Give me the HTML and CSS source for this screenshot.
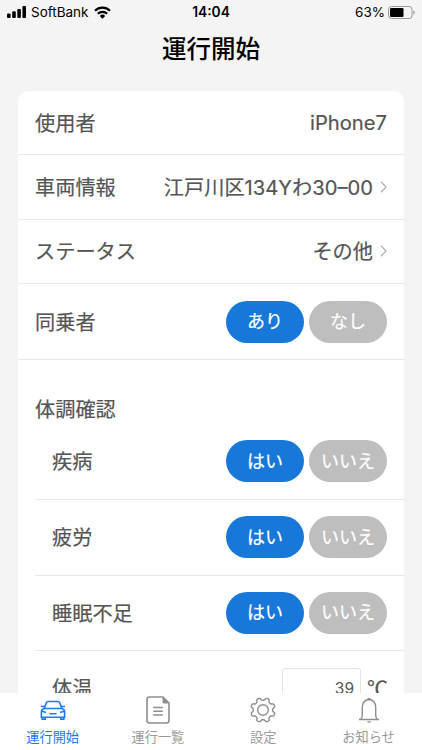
FILE: index.html
```html
<!DOCTYPE html>
<html lang="ja">
<head>
  <meta charset="UTF-8">
  <meta name="viewport" content="width=device-width, initial-scale=1.0">
  <title>運行開始</title>
  <link rel="stylesheet" href="styles.css">
</head>
<body>
  <div class="status-bar">
    <div class="carrier">
      <svg width="20" height="12" viewBox="0 0 20 12"><rect x="0" y="7.5" width="3.6" height="4.5" rx="1"/><rect x="5.2" y="5.3" width="3.6" height="6.7" rx="1"/><rect x="10.3" y="3" width="3.6" height="9" rx="1"/><rect x="15.4" y="0" width="3.6" height="12" rx="1"/></svg>
      <span class="carrier-name">SoftBank</span>
      <svg width="17" height="13" viewBox="0 0 17 13"><g fill="none" stroke="#000" stroke-width="2.2"><path d="M1 4.8a10.6 10.6 0 0 1 15 0"/><path d="M3.8 7.8a6.7 6.7 0 0 1 9.4 0"/></g><path d="M5.8 9.9a3.9 3.9 0 0 1 5.4 0L8.5 12.7z"/></svg>
    </div>
    <span class="clock">14:04</span>
    <div class="battery">
      <span>63%</span>
      <svg width="27" height="13" viewBox="0 0 27 13"><rect x=".5" y=".5" width="23.5" height="12" rx="3" fill="none" stroke="#999"/><rect x="2" y="2" width="13.5" height="9" rx="1.2"/><path d="M25.3 4.3q1.5.8 1.5 2.2t-1.5 2.2z" fill="#999"/></svg>
    </div>
  </div>
  <h1>運行開始</h1>

  <main>
    <div class="card">
      <div class="row">
        <span>使用者</span>
        <span class="value device">iPhone7</span>
      </div>
      <div class="row">
        <span>車両情報</span>
        <span class="value">江戸川区134Yわ30–00<svg class="chevron" viewBox="0 0 7 12"><path d="M1 .8 6 6 1 11.2"/></svg></span>
      </div>
      <div class="row">
        <span>ステータス</span>
        <span class="value">その他<svg class="chevron" viewBox="0 0 7 12"><path d="M1 .8 6 6 1 11.2"/></svg></span>
      </div>
      <div class="row row-choice">
        <span>同乗者</span>
        <div class="choices"><button class="active">あり</button><button>なし</button></div>
      </div>

      <h2>体調確認</h2>
      <div class="checks">
        <div class="row row-choice">
          <span>疾病</span>
          <div class="choices"><button class="active">はい</button><button>いいえ</button></div>
        </div>
        <div class="row row-choice">
          <span>疲労</span>
          <div class="choices"><button class="active">はい</button><button>いいえ</button></div>
        </div>
        <div class="row row-choice">
          <span>睡眠不足</span>
          <div class="choices"><button class="active">はい</button><button>いいえ</button></div>
        </div>
        <div class="row row-temp">
          <span>体温</span>
          <div class="temp"><input type="text" value="39"><span class="unit">℃</span></div>
        </div>
      </div>
    </div>
  </main>

  <nav>
    <a class="active">
      <svg width="28" height="28" viewBox="0 0 28 28"><path d="M5.2 12.5 7.3 6.7q.4-1.200 1.700-1.200h10q1.300 0 1.700 1.200l2.100 5.800M2 10.500h3.500M22.500 10.500H26M5.200 12.500h17.600q2.800.8 2.800 3.500v5.300H2.400V16q0-2.700 2.800-3.500zM3.200 21.300v1.900h3v-1.900M24.800 21.300v1.900h-3v-1.900M10.500 17.800h7M3.200 15.200l3.800 1.200M24.800 15.200l-3.800 1.200"/></svg>
      <span>運行開始</span>
    </a>
    <a>
      <svg width="28" height="28" viewBox="0 0 28 28"><path d="M19 1H5.5Q3 1 3 3.500v21Q3 27 5.500 27h17q2.500 0 2.500-2.500V7z"/><path class="solid" d="M18.500 1v5q0 1.500 1.500 1.500h5.500z"/><path d="M9.200 11.500h9.600M9.200 15.200h9.600M9.200 19h9.600"/></svg>
      <span>運行一覧</span>
    </a>
    <a>
      <svg class="thin" width="28" height="28" viewBox="0 0 28 28"><path id="gear" d=""/><circle cx="14" cy="14" r="5.3"/></svg>
      <span>設定</span>
    </a>
    <a>
      <svg class="thin" width="28" height="28" viewBox="0 0 28 28"><path d="M4 23.500h20M6 23.200q1.300-1.800 1.300-4.500v-7q0-7.500 6.700-8.200 6.700.7 6.700 8.200v7q0 2.700 1.300 4.500"/><path class="solid" d="M12 4q0-2.300 2-2.300T16 4zM12 25.300h4q-.6 1.500-2 1.500t-2-1.500z"/></svg>
      <span>お知らせ</span>
    </a>
  </nav>
  <script src="script.js"></script>
</body>
</html>
```
FILE: styles.css
```css
*{box-sizing:border-box}
body{margin:0;height:100vh;overflow:hidden;display:flex;flex-direction:column;background:#f4f4f4;color:#555;font-family:Inter,"Noto Sans CJK JP",sans-serif}
.status-bar{height:24px;flex:none;display:grid;grid-template-columns:1fr auto 1fr;align-items:center;padding:0 7px;color:#000;font-size:13.5px}
.carrier,.battery{display:flex;align-items:center}
.carrier-name{margin:0 5px 0 4px}
.battery{justify-content:flex-end;gap:3px}
.clock{font-weight:600;font-size:13.8px}
h1{margin:0;height:67px;flex:none;line-height:50px;text-align:center;font-size:24.5px;font-weight:500;color:#000}
main{flex:1;min-height:0;overflow:hidden;padding:0 18px}
.card{background:#fff;border-radius:10px 10px 0 0}
.row{display:flex;justify-content:space-between;align-items:center;height:64.4px;padding:0 17px;border-bottom:1px solid #e9e9e9;font-size:20.2px;line-height:30px}
.row>span{padding-top:2px;-webkit-text-stroke:.2px}
.row>.device{padding-top:0}
.value{display:flex;align-items:center}
.chevron{width:7px;height:12px;margin:-2px 0 0 7px;fill:none;stroke:#b0b0b0;stroke-width:1.3}
.row-choice{height:75.8px}
.choices{display:flex;gap:5px}
.choices button{width:78px;height:42px;padding:1px 0 0;border:none;border-radius:21px;background:#bebebe;color:#fff;font:inherit;font-size:18px;-webkit-text-stroke:.2px}
.choices .active{background:#1778da}
h2{margin:0;height:64px;padding:35px 17px 0;line-height:30px;font-size:20.2px;font-weight:400;-webkit-text-stroke:.2px}
.checks{margin-left:17px}
.row-temp{height:75px;border:none}
.row-temp>span{padding-top:0}
.temp{display:flex;align-items:center;gap:6px}
.temp input{width:79px;height:42px;padding:0 6px;border:1px solid #e4e4e4;border-radius:3px;text-align:right;color:#555;font:inherit;font-size:15.5px}
.unit{width:20px;margin-top:-3px;font-family:"Noto Sans CJK JP",sans-serif;font-size:21px;-webkit-text-stroke:.2px}
nav{flex:none;height:57px;display:grid;grid-template-columns:repeat(4,105.3px);background:#fff}
nav a{display:flex;flex-direction:column;align-items:center;padding-top:3px;color:#999;font-size:13.2px;line-height:20px}
nav svg{fill:none;stroke:#8e8e8e;stroke-width:1.6;margin-bottom:3px}
nav .thin{stroke-width:1.4}
nav .solid{fill:#8e8e8e;stroke:none}
nav .active{color:#1a7af8}
nav .active svg{stroke:#1a7af8}
```
FILE: script.js
```js
// outline of the settings gear: eight soft teeth
const points = [];
for (let i = 0; i < 144; i++) {
  const a = i / 144 * Math.PI * 2;
  const r = 11 + 1.3 * Math.tanh(2 * Math.cos(8 * a + Math.PI)) / Math.tanh(2);
  points.push((14 + r * Math.sin(a)).toFixed(2) + ' ' + (14 - r * Math.cos(a)).toFixed(2));
}
document.getElementById('gear').setAttribute('d', 'M' + points.join('L') + 'z');
```
